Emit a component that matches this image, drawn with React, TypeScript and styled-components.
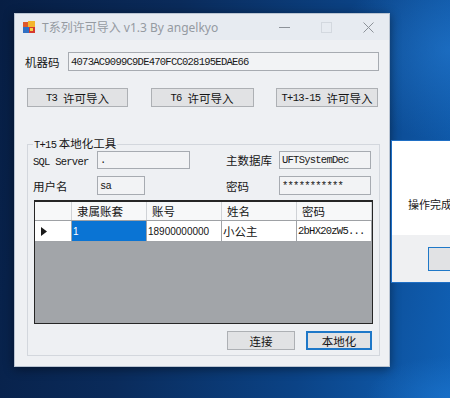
import React from "react"
import styled, { createGlobalStyle } from "styled-components"

const GlobalStyle = createGlobalStyle`
  html, body {
    margin: 0;
    padding: 0;
  }
  body {
    width: 450px;
    height: 398px;
    overflow: hidden;
    font-family: "Noto Sans CJK SC", sans-serif;
  }
`

const CJK = `"Noto Sans CJK SC", "Noto Sans", sans-serif`

const Desktop = styled.div`
  position: relative;
  width: 450px;
  height: 398px;
  overflow: hidden;
  background:
    radial-gradient(ellipse 160px 130px at 450px 50px, rgba(40, 130, 220, 0.5), transparent 70%),
    radial-gradient(ellipse 120px 60px at 450px 398px, rgba(30, 120, 210, 0.6), transparent 70%),
    linear-gradient(100deg, #071e44 0%, #0a2b5b 35%, #0b4386 70%, #1061b6 100%);
`

const AppWindow = styled.div`
  position: absolute;
  left: 14px;
  top: 13px;
  width: 376px;
  height: 354px;
  box-sizing: border-box;
  border: 1px solid #b9c4d2;
  background: #eef0f3;
  box-shadow: 0 2px 10px rgba(0, 0, 0, 0.45);
  display: flex;
  flex-direction: column;
`

const TitleBar = styled.div`
  height: 26px;
  flex: none;
  display: flex;
  align-items: center;
  padding-left: 8px;
  background: #e7ebf1;
  color: #959aa1;
  font: 12px "Noto Sans", "Noto Sans CJK SC", sans-serif;
`

const TitleText = styled.span`
  margin-left: 7px;
  flex: 1;
  white-space: nowrap;
`

const CaptionButton = styled.div`
  width: 42px;
  height: 26px;
  display: flex;
  align-items: center;
  justify-content: center;
`

const Client = styled.div`
  flex: 1;
  display: flex;
  flex-direction: column;
`

const MachineRow = styled.div`
  display: flex;
  align-items: center;
  margin: 12px 10px 0 10px;
  height: 19px;
`

const Label = styled.span`
  font: 11.5px ${CJK};
  color: #161616;
  white-space: nowrap;
`

const MachineLabel = styled(Label)`
  width: 43px;
  flex: none;
`

const Mono = styled.span`
  font-family: "Liberation Mono", monospace;
  font-size: 10.5px;
  letter-spacing: -0.75px;
`

const TextBox = styled.div<{ $width?: number; $height: number }>`
  box-sizing: border-box;
  flex: ${(p) => (p.$width ? "none" : "1")};
  width: ${(p) => (p.$width ? `${p.$width}px` : "auto")};
  height: ${(p) => p.$height}px;
  border: 1px solid #a7abb1;
  background: #f2f3f5;
  display: flex;
  align-items: center;
  padding-left: 2px;
  color: #1a1a1a;
  font-family: "Liberation Mono", monospace;
  font-size: 10.5px;
  letter-spacing: -0.75px;
  white-space: nowrap;
  overflow: hidden;
`

const ButtonRow = styled.div`
  display: flex;
  justify-content: space-between;
  margin: 17px 11px 0 12px;
`

const Button = styled.div<{ $width: number; $focused?: boolean }>`
  box-sizing: border-box;
  width: ${(p) => p.$width}px;
  height: 19px;
  border: 1px solid ${(p) => (p.$focused ? "#1f78c8" : "#adb0b4")};
  box-shadow: ${(p) => (p.$focused ? "inset 0 0 0 1px #1f78c8" : "none")};
  background: #e1e2e4;
  display: flex;
  align-items: center;
  justify-content: center;
  gap: 6px;
  font: 11.5px ${CJK};
  color: #141414;
  white-space: nowrap;
`

const GroupBox = styled.fieldset`
  margin: 30px 9px 0 12px;
  padding: 0 6px 5px 5px;
  border: 1px solid #d3d7dd;
  min-width: 0;
`

const Legend = styled.legend`
  padding: 0 1px;
  margin: 0;
  font: 11.5px/12px ${CJK};
  color: #161616;
`

const Fields = styled.div`
  display: grid;
  grid-template-columns: 64px 129px 53px 92px;
  grid-template-rows: 18px 19px;
  row-gap: 7px;
  align-items: center;
`

const DataGrid = styled.div`
  margin: 5px 0 0 1px;
  width: 339px;
  height: 124px;
  box-sizing: border-box;
  border: 1px solid #262626;
  border-top-width: 2px;
  background: #a2a5a9;
  display: flex;
  flex-direction: column;
`

const GridRow = styled.div<{ $height: number; $header?: boolean }>`
  display: grid;
  grid-template-columns: 37px 75px 75px 75px 1fr;
  height: ${(p) => p.$height}px;
  box-sizing: border-box;
  background: ${(p) => (p.$header ? "#f7f8f9" : "#ffffff")};
  border-bottom: 1px solid ${(p) => (p.$header ? "#9ea1a5" : "#a0a3a7")};
`

const Cell = styled.div<{ $selected?: boolean; $header?: boolean }>`
  display: flex;
  align-items: center;
  padding-left: ${(p) => (p.$header ? 5 : 1)}px;
  border-right: 1px solid ${(p) => (p.$header ? "#cfd2d6" : "#a0a3a7")};
  background: ${(p) => (p.$selected ? "#0a74d4" : "transparent")};
  color: ${(p) => (p.$selected ? "#ffffff" : "#141414")};
  font: 11.5px ${CJK};
  white-space: nowrap;
  overflow: hidden;
`

const RowHeader = styled(Cell)`
  padding-left: 6px;
`

const Digits = styled.span`
  font: 10px "Liberation Sans", sans-serif;
`

const BottomRow = styled.div`
  display: flex;
  justify-content: flex-end;
  gap: 11px;
  margin: 7px 1px 0 0;
`

const Dialog = styled.div`
  position: absolute;
  left: 391px;
  top: 140px;
  width: 90px;
  height: 143px;
  box-sizing: border-box;
  border: 1px solid #1f6fc5;
  display: flex;
  flex-direction: column;
`

const DialogBody = styled.div`
  flex: 1;
  background: #ffffff;
  padding: 56px 0 0 16px;
  font: 11px/14px ${CJK};
  color: #202020;
  white-space: nowrap;
`

const DialogFooter = styled.div`
  height: 47px;
  flex: none;
  background: #eff0f2;
  padding: 12px 0 0 36px;
  box-sizing: border-box;
`

const DialogButton = styled.div`
  width: 75px;
  height: 24px;
  box-sizing: border-box;
  border: 1px solid #1f78c8;
  background: #e1e2e4;
`

function AppIcon() {
  return (
    <svg width="12" height="12" viewBox="0 0 12 12">
      <rect x="0" y="1" width="5" height="5" fill="#e0582a" />
      <rect x="5" y="0" width="7" height="6" fill="#f3b52e" />
      <rect x="0" y="6" width="6" height="6" fill="#2f6fc4" />
      <rect x="6" y="6" width="6" height="6" fill="#d6392e" />
      <rect x="7" y="7" width="3" height="3" fill="#f6d04d" />
    </svg>
  )
}

export default function App() {
  return (
    <>
      <GlobalStyle />
      <Desktop>
        <AppWindow>
          <TitleBar>
            <AppIcon />
            <TitleText>T系列许可导入 v1.3 By angelkyo</TitleText>
            <CaptionButton>
              <svg width="11" height="11" viewBox="0 0 11 11">
                <line x1="0" y1="5.5" x2="11" y2="5.5" stroke="#8d9299" strokeWidth="1" />
              </svg>
            </CaptionButton>
            <CaptionButton>
              <svg width="11" height="11" viewBox="0 0 11 11">
                <rect x="0.5" y="0.5" width="10" height="10" fill="none" stroke="#d3d8df" strokeWidth="1" />
              </svg>
            </CaptionButton>
            <CaptionButton>
              <svg width="11" height="11" viewBox="0 0 11 11">
                <path d="M0.5 0.5 L10.5 10.5 M10.5 0.5 L0.5 10.5" stroke="#8d9299" strokeWidth="1" />
              </svg>
            </CaptionButton>
          </TitleBar>
          <Client>
            <MachineRow>
              <MachineLabel>机器码</MachineLabel>
              <TextBox $height={19}>4073AC9099C9DE470FCC028195EDAE66</TextBox>
            </MachineRow>
            <ButtonRow>
              <Button $width={101}>
                <Mono>T3</Mono>许可导入
              </Button>
              <Button $width={103}>
                <Mono>T6</Mono>许可导入
              </Button>
              <Button $width={102}>
                <Mono>T+13-15</Mono>许可导入
              </Button>
            </ButtonRow>
            <GroupBox>
              <Legend>
                <Mono>T+15</Mono> 本地化工具
              </Legend>
              <Fields>
                <Label>
                  <Mono>SQL Server</Mono>
                </Label>
                <TextBox $width={93} $height={18}>.</TextBox>
                <Label>主数据库</Label>
                <TextBox $width={92} $height={18}>UFTSystemDec</TextBox>
                <Label>用户名</Label>
                <TextBox $width={48} $height={19}>sa</TextBox>
                <Label>密码</Label>
                <TextBox $width={92} $height={19}>***********</TextBox>
              </Fields>
              <DataGrid>
                <GridRow $height={19} $header>
                  <Cell $header />
                  <Cell $header>隶属账套</Cell>
                  <Cell $header>账号</Cell>
                  <Cell $header>姓名</Cell>
                  <Cell $header>密码</Cell>
                </GridRow>
                <GridRow $height={21}>
                  <RowHeader>
                    <svg width="6" height="9" viewBox="0 0 6 9">
                      <path d="M0 0 L6 4.5 L0 9 Z" fill="#1a1a1a" />
                    </svg>
                  </RowHeader>
                  <Cell $selected>
                    <Digits>1</Digits>
                  </Cell>
                  <Cell>
                    <Digits>18900000000</Digits>
                  </Cell>
                  <Cell>小公主</Cell>
                  <Cell>
                    <Mono>2bHX20zW5...</Mono>
                  </Cell>
                </GridRow>
              </DataGrid>
              <BottomRow>
                <Button $width={68}>连接</Button>
                <Button $width={66} $focused>
                  本地化
                </Button>
              </BottomRow>
            </GroupBox>
          </Client>
        </AppWindow>
        <Dialog>
          <DialogBody>操作完成</DialogBody>
          <DialogFooter>
            <DialogButton />
          </DialogFooter>
        </Dialog>
      </Desktop>
    </>
  )
}
